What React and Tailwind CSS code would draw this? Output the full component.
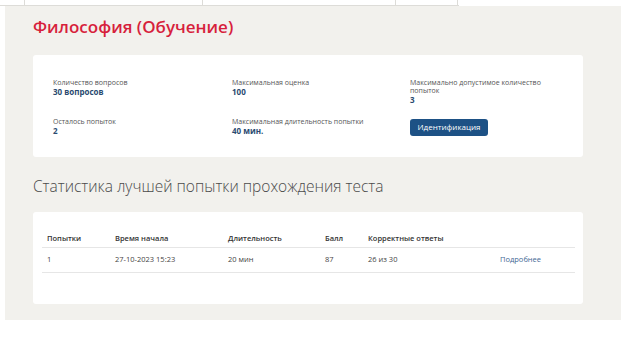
export default function App() {
  const info = [
    { label: 'Количество вопросов', value: '30 вопросов' },
    { label: 'Максимальная оценка', value: '100' },
    { label: 'Максимально допустимое количество попыток', value: '3' },
  ];

  const cols = [
    { h: 'Попытки', v: '1', w: 'w-[68px]' },
    { h: 'Время начала', v: '27-10-2023 15:23', w: 'w-[113px]' },
    { h: 'Длительность', v: '20 мин', w: 'w-[97px]' },
    { h: 'Балл', v: '87', w: 'w-[43px]' },
    { h: 'Корректные ответы', v: '26 из 30', w: 'w-[132px]' },
    { h: '', v: 'Подробнее', w: '', link: true },
  ];

  return (
    <div className="w-[621px] h-[354px] bg-white overflow-hidden font-['Open_Sans',sans-serif]">
      {/* top strip */}
      <div className="flex h-[6px] w-[459px] border-b border-[#dddcd8]">
        <div className="w-[25px] border-r border-[#dddcd8]" />
        <div className="w-[178px] border-r border-[#dddcd8]" />
        <div className="w-[193px] border-r border-[#dddcd8]" />
        <div className="w-[62px] border-r border-[#dddcd8]" />
      </div>

      <div className="ml-[5px] h-[314px] bg-[#f2f1ed] pl-[28px] pr-[38px] pt-[10px]">
        <h1 className="text-[17px] leading-[22px] font-semibold text-[#d71f3c]">
          Философия (Обучение)
        </h1>

        <div className="mt-[17px] h-[102px] bg-white rounded-[3px] pl-[20px] pt-[24px]">
          <div className="grid grid-cols-[179px_178px_140px]">
            {info.map(i => (
              <div key={i.label}>
                <p className="text-[7px] leading-[8px] text-[#555]">{i.label}</p>
                <p className="text-[8px] leading-[9px] font-bold text-[#2a4a70]">{i.value}</p>
              </div>
            ))}
          </div>
          <div className="grid grid-cols-[179px_178px_140px] mt-[8px]">
            <div className="pt-[6px]">
              <p className="text-[7px] leading-[8px] text-[#555]">Осталось попыток</p>
              <p className="text-[8px] leading-[9px] font-bold text-[#2a4a70]">2</p>
            </div>
            <div className="pt-[6px]">
              <p className="text-[7px] leading-[8px] text-[#555]">Максимальная длительность попытки</p>
              <p className="text-[8px] leading-[9px] font-bold text-[#2a4a70]">40 мин.</p>
            </div>
            <div>
              <button className="h-[17px] w-[78px] rounded-[3px] bg-[#1d5185] text-white text-[8px] font-medium leading-none">
                Идентификация
              </button>
            </div>
          </div>
        </div>

        <h2 className="mt-[19px] text-[15.5px] leading-[20px] font-light text-[#4a4a4a]">
          Статистика лучшей попытки прохождения теста
        </h2>

        <div className="mt-[16px] h-[92px] bg-white rounded-[3px] pl-[9px] pr-[8px] pt-[19px]">
          <table className="w-full border-collapse table-fixed">
            <thead>
              <tr className="border-b border-[#e6e6e6]">
                {cols.map((c, i) => (
                  <th key={i} className={`${c.w} text-left px-[5px] h-[16px] text-[7.5px] font-semibold text-[#333]`}>{c.h}</th>
                ))}
              </tr>
            </thead>
            <tbody>
              <tr className="border-b border-[#e6e6e6]">
                {cols.map((c, i) => (
                  <td key={i} className={`px-[5px] h-[25px] text-[7.5px] ${c.link ? 'text-[#3f6894]' : 'text-[#444]'}`}>{c.v}</td>
                ))}
              </tr>
            </tbody>
          </table>
        </div>
      </div>
    </div>
  );
}
